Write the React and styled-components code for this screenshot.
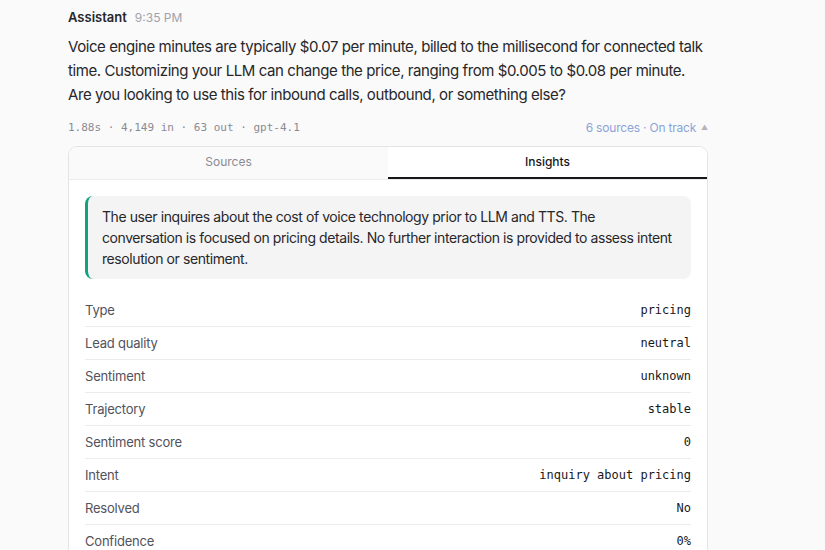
import React, { useState } from 'react';
import styled, { createGlobalStyle } from 'styled-components';

const Global = createGlobalStyle`
  html, body { margin: 0; padding: 0; background: #fafafa; }
  body { font-family: Inter, "Noto Sans", sans-serif; color: #18181b; -webkit-font-smoothing: antialiased; }
`;

const Page = styled.div`padding: 9px 117px 0 68px; height: 550px; box-sizing: border-box; overflow: hidden;`;
const Head = styled.div`display: flex; align-items: baseline; gap: 8px; height: 17px;`;
const Author = styled.span`font-size: 13px; font-weight: 600; color: #27272a;`;
const Time = styled.span`font-size: 12px; color: #a1a1aa;`;
const Body = styled.p`margin: 9px -4px 0 0; font-size: 15px; line-height: 24px; color: #27272a; letter-spacing: -0.42px;`;
const Meta = styled.div`display: flex; justify-content: space-between; align-items: center; margin-top: 11px; height: 18px;`;
const Stats = styled.span`font-family: "DejaVu Sans Mono", monospace; font-size: 11px; color: #8b8b93;`;
const Status = styled.button`border: 0; background: none; padding: 0; display: flex; align-items: center; gap: 5px; font: inherit; font-size: 12px; letter-spacing: -0.2px; color: #8aa4d8; cursor: pointer;`;
const Caret = styled.span`font-size: 7px; color: #b4b4bb;`;

const Card = styled.div`margin-top: 10px; background: #fff; border: 1px solid #e4e4e7; border-radius: 9px; overflow: hidden;`;
const Tabs = styled.div`display: grid; grid-template-columns: 1fr 1fr; border-bottom: 1px solid #ececef;`;
const Tab = styled.button`
  height: 32px; padding: 8px 0 0; border: 0; font: inherit; font-size: 12px; line-height: 14px; cursor: pointer;
  display: flex; justify-content: center; align-items: flex-start;
  background: ${p => (p.$active ? '#fff' : '#fafafa')};
  color: ${p => (p.$active ? '#18181b' : '#8b8b93')};
  font-weight: ${p => (p.$active ? 500 : 400)};
  box-shadow: ${p => (p.$active ? 'inset 0 -2px 0 #18181b' : 'none')};
`;
const Panel = styled.div`padding: 16px 16px 0;`;
const Summary = styled.div`
  background: #f4f4f5; border-left: 3px solid #10a37f; border-radius: 8px;
  padding: 10px 16px 10px 14px; font-size: 14px; line-height: 21px; color: #27272a; letter-spacing: -0.42px;
`;
const Fields = styled.div`margin-top: 15px;`;
const Row = styled.div`
  display: flex; justify-content: space-between; align-items: center; height: 32px;
  & + & { border-top: 1px solid #ececef; }
`;
const Label = styled.span`font-size: 13px; color: #52525b; letter-spacing: -0.2px;`;
const Value = styled.span`font-family: "DejaVu Sans Mono", monospace; font-size: 12px; color: #18181b;`;

const fields = [
  ['Type', 'pricing'],
  ['Lead quality', 'neutral'],
  ['Sentiment', 'unknown'],
  ['Trajectory', 'stable'],
  ['Sentiment score', '0'],
  ['Intent', 'inquiry about pricing'],
  ['Resolved', 'No'],
  ['Confidence', '0%'],
];

export default function App() {
  const [tab, setTab] = useState('insights');
  return (
    <Page>
      <Global />
      <Head><Author>Assistant</Author><Time>9:35 PM</Time></Head>
      <Body>
        Voice engine minutes are typically $0.07 per minute, billed to the millisecond for connected talk
        time. Customizing your LLM can change the price, ranging from $0.005 to $0.08 per minute.
        Are you looking to use this for inbound calls, outbound, or something else?
      </Body>
      <Meta>
        <Stats>1.88s · 4,149 in · 63 out · gpt-4.1</Stats>
        <Status>6 sources · On track <Caret>▲</Caret></Status>
      </Meta>
      <Card>
        <Tabs>
          <Tab $active={tab === 'sources'} onClick={() => setTab('sources')}>Sources</Tab>
          <Tab $active={tab === 'insights'} onClick={() => setTab('insights')}>Insights</Tab>
        </Tabs>
        <Panel>
          <Summary>
            The user inquires about the cost of voice technology prior to LLM and TTS. The
            conversation is focused on pricing details. No further interaction is provided to assess intent
            resolution or sentiment.
          </Summary>
          <Fields>
            {fields.map(([k, v]) => (
              <Row key={k}><Label>{k}</Label><Value>{v}</Value></Row>
            ))}
          </Fields>
        </Panel>
      </Card>
    </Page>
  );
}
